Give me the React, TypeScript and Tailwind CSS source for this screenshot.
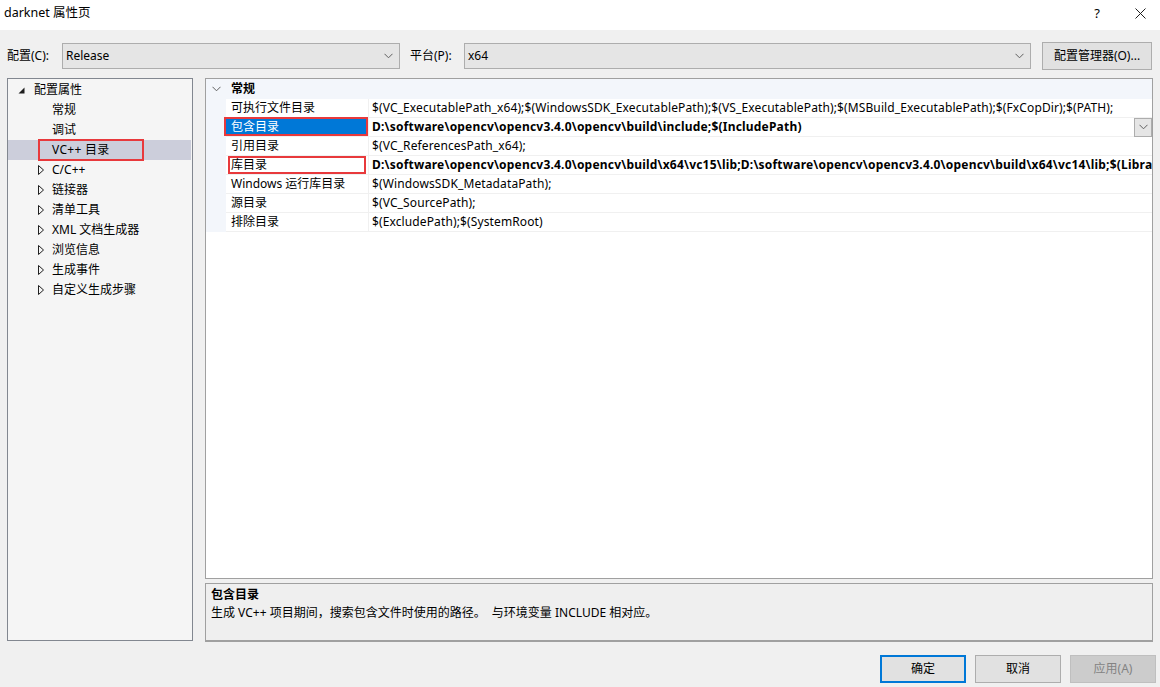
import type { ReactNode } from 'react';

const font = "font-['Noto_Sans','Noto_Sans_CJK_SC',sans-serif]";

function Chevron({ className = '' }: { className?: string }) {
  return (
    <svg width="9" height="6" viewBox="0 0 9 6" className={className}>
      <path d="M0.5 0.8 L4.5 4.8 L8.5 0.8" fill="none" stroke="#606060" strokeWidth="1" />
    </svg>
  );
}

function Combo({ value, width }: { value: string; width: string }) {
  return (
    <div className={`flex h-[26px] ${width} items-center justify-between border border-[#adadad] bg-[#e5e5e5] pr-[6px] pl-[3px]`}>
      <span>{value}</span>
      <Chevron />
    </div>
  );
}

function OpenTri() {
  return (
    <svg width="7" height="7" viewBox="0 0 7 7">
      <path d="M6.5 0.5 L6.5 6.5 L0.5 6.5 Z" fill="#1e1e1e" />
    </svg>
  );
}

function ClosedTri() {
  return (
    <svg width="6" height="10" viewBox="0 0 6 10">
      <path d="M0.5 0.5 L5.5 5 L0.5 9.5 Z" fill="none" stroke="#1e1e1e" strokeWidth="1" />
    </svg>
  );
}

const treeItems: { label: string; expandable?: boolean; selected?: boolean }[] = [
  { label: '常规' },
  { label: '调试' },
  { label: 'VC++ 目录', selected: true },
  { label: 'C/C++', expandable: true },
  { label: '链接器', expandable: true },
  { label: '清单工具', expandable: true },
  { label: 'XML 文档生成器', expandable: true },
  { label: '浏览信息', expandable: true },
  { label: '生成事件', expandable: true },
  { label: '自定义生成步骤', expandable: true },
];

const rows: { name: string; value: string; bold?: boolean; selected?: boolean; marked?: boolean }[] = [
  {
    name: '可执行文件目录',
    value: '$(VC_ExecutablePath_x64);$(WindowsSDK_ExecutablePath);$(VS_ExecutablePath);$(MSBuild_ExecutablePath);$(FxCopDir);$(PATH);',
  },
  {
    name: '包含目录',
    value: 'D:\\software\\opencv\\opencv3.4.0\\opencv\\build\\include;$(IncludePath)',
    bold: true,
    selected: true,
  },
  { name: '引用目录', value: '$(VC_ReferencesPath_x64);' },
  {
    name: '库目录',
    value:
      'D:\\software\\opencv\\opencv3.4.0\\opencv\\build\\x64\\vc15\\lib;D:\\software\\opencv\\opencv3.4.0\\opencv\\build\\x64\\vc14\\lib;$(LibraryPath)',
    bold: true,
    marked: true,
  },
  { name: 'Windows 运行库目录', value: '$(WindowsSDK_MetadataPath);' },
  { name: '源目录', value: '$(VC_SourcePath);' },
  { name: '排除目录', value: '$(ExcludePath);$(SystemRoot)' },
];

function Button({ children, variant }: { children: ReactNode; variant: 'default' | 'normal' | 'disabled' }) {
  const styles = {
    default: 'border-2 border-[#0078d7] bg-[#e1e1e1] text-black',
    normal: 'border border-[#adadad] bg-[#e1e1e1] text-black',
    disabled: 'border border-[#bfbfbf] bg-[#cccccc] text-[#838383]',
  }[variant];
  return <div className={`flex h-[28px] w-[86px] items-center justify-center ${styles}`}>{children}</div>;
}

export default function App() {
  return (
    <div className={`flex h-[687px] w-[1160px] flex-col bg-[#f0f0f0] text-[12px] leading-[16px] text-black ${font}`}>
      {/* title bar */}
      <div className="flex h-[30px] items-center justify-between bg-white pl-[4px] text-[12.5px]">
        <span className="-mt-[4px]">darknet 属性页</span>
        <div className="-mt-[4px] flex items-center">
          <span className="w-[20px] text-center text-[13px]">?</span>
          <svg width="11" height="11" viewBox="0 0 11 11" className="mr-[14px] ml-[28px]">
            <path d="M0.5 0.5 L10.5 10.5 M10.5 0.5 L0.5 10.5" stroke="#1e1e1e" strokeWidth="1" />
          </svg>
        </div>
      </div>

      {/* configuration row */}
      <div className="flex items-center pt-[12px] pl-[7px]">
        <span className="w-[55px]">配置(C):</span>
        <Combo value="Release" width="w-[338px]" />
        <span className="ml-[10px] w-[54px]">平台(P):</span>
        <Combo value="x64" width="w-[567px]" />
        <div className="ml-[11px] flex h-[28px] w-[110px] items-center justify-center border border-[#adadad] bg-[#e1e1e1]">
          配置管理器(O)...
        </div>
      </div>

      {/* main area */}
      <div className="mt-[8px] flex gap-[12px] pl-[7px]">
        {/* tree */}
        <div className="h-[563px] w-[186px] border border-[#828790] bg-[#f5f5f5] pt-[1px] pr-[1px]">
          <div className="flex h-[20px] items-center pl-[10px]">
            <OpenTri />
            <span className="ml-[9px]">配置属性</span>
          </div>
          {treeItems.map((item) => (
            <div
              key={item.label}
              className={`flex h-[20px] items-center ${item.selected ? 'bg-[#cccedb]' : ''}`}
            >
              <div className="flex w-[44px] justify-end pr-[8px]">{item.expandable && <ClosedTri />}</div>
              {item.selected ? (
                <span className="relative tracking-[0.3px]">
                  {item.label}
                  <span className="absolute -top-[3px] -right-[34px] -bottom-[3px] -left-[14px] border-2 border-[#e8393c]" />
                </span>
              ) : (
                <span>{item.label}</span>
              )}
            </div>
          ))}
        </div>

        {/* property grid + description */}
        <div className="flex w-[948px] flex-col gap-[4px]">
          <div className="h-[501px] overflow-hidden border border-[#a0a0a0] bg-white">
            <div className="flex h-[20px] items-center bg-[#f3f6fb]">
              <div className="flex w-[20px] justify-center">
                <Chevron />
              </div>
              <span className="ml-[5px] font-bold">常规</span>
            </div>
            {rows.map((row) => (
              <div key={row.name} className="flex h-[19px]">
                <div className="w-[20px] bg-[#f3f6fb]" />
                <div
                  className={`relative flex w-[142px] items-center border-b border-[#f0f0f0] pl-[5px] ${
                    row.selected ? 'bg-[#0078d7] text-white' : ''
                  }`}
                >
                  {row.name}
                  {row.selected && (
                    <span className="absolute -top-[1px] right-0 bottom-0 -left-[2px] border-2 border-[#e8393c]" />
                  )}
                  {row.marked && (
                    <span className="absolute top-[0px] right-[2px] bottom-[0px] left-[2px] border-2 border-[#e8393c]" />
                  )}
                </div>
                <div className="flex min-w-0 flex-1 items-center border-b border-l border-[#f0f0f0] pl-[3px]">
                  <div className="min-w-0 flex-1 overflow-hidden">
                    <span
                      className={`whitespace-nowrap ${row.bold ? 'font-bold tracking-[0.2px]' : 'tracking-[0.12px]'}`}
                    >
                      {row.value}
                    </span>
                  </div>
                  {row.selected && (
                    <div className="flex h-[19px] w-[18px] shrink-0 items-center justify-center border border-[#adadad] bg-[#e5e5e5]">
                      <Chevron />
                    </div>
                  )}
                </div>
              </div>
            ))}
          </div>
          <div className="h-[59px] border border-b-2 border-[#a0a0a0] bg-[#efefef] px-[5px] pt-[3px]">
            <div className="font-bold">包含目录</div>
            <div className="mt-[2px]">生成 VC++ 项目期间，搜索包含文件时使用的路径。&nbsp; 与环境变量 INCLUDE 相对应。</div>
          </div>
        </div>
      </div>

      {/* buttons */}
      <div className="mt-[13px] flex justify-end gap-[9px] pr-[4px]">
        <Button variant="default">确定</Button>
        <Button variant="normal">取消</Button>
        <Button variant="disabled">应用(A)</Button>
      </div>
    </div>
  );
}
